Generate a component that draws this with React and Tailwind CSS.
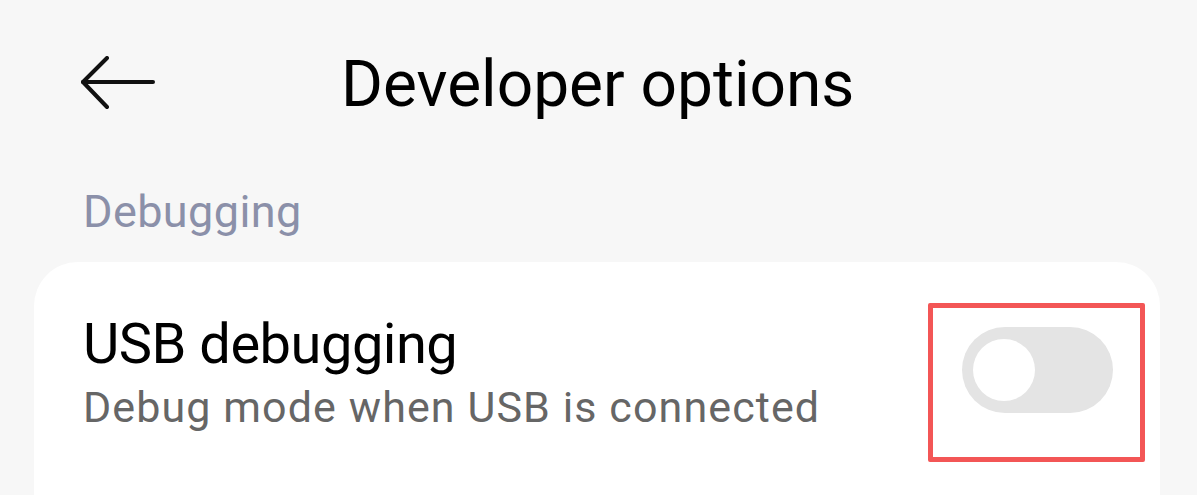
import React from 'react'

function BackArrow() {
  return (
    <svg width="74" height="54" viewBox="0 0 74 54" fill="none" stroke="#111" strokeWidth="4" strokeLinecap="round" strokeLinejoin="round">
      <path d="M26 2 L2 26 L26 51" />
      <path d="M2 26 H72" />
    </svg>
  )
}

function Toggle() {
  return (
    <div className="w-[151px] h-[86px] rounded-full bg-[#e4e4e4] pl-[11px] pt-[12px]">
      <div className="w-[62px] h-[62px] rounded-full bg-white" />
    </div>
  )
}

export default function App() {
  return (
    <div className="h-[495px] overflow-hidden bg-[#f7f7f7] font-['Roboto',sans-serif]">
      {/* Header */}
      <div className="flex items-start pt-[45px] pl-[81px]">
        <div className="mt-[11px]">
          <BackArrow />
        </div>
        <h1 className="ml-[186px] text-[64px] leading-[80px] text-black tracking-[0px]">
          Developer options
        </h1>
      </div>

      {/* Section label */}
      <div className="mt-[61px] pl-[83px] text-[45px] leading-[52px] text-[#8b90a9] tracking-[0.4px]">
        Debugging
      </div>

      {/* Card */}
      <div className="mt-[24px] ml-[34px] mr-[37px] h-[300px] rounded-[44px] bg-white pl-[49px] pr-[15px] pt-[41px]">
        <div className="flex items-start justify-between">
          <div className="mt-[9px]">
            <div className="text-[56px] leading-[64px] text-black tracking-[-0.5px]">USB debugging</div>
            <div className="mt-[7px] text-[43px] leading-[48px] text-[#666666] tracking-[1.1px]">
              Debug mode when USB is connected
            </div>
          </div>
          <div className="border-[5px] border-[#f35656] rounded-[2px] pl-[29px] pt-[19px] pr-[27px] pb-[44px]">
            <Toggle />
          </div>
        </div>
      </div>
    </div>
  )
}
